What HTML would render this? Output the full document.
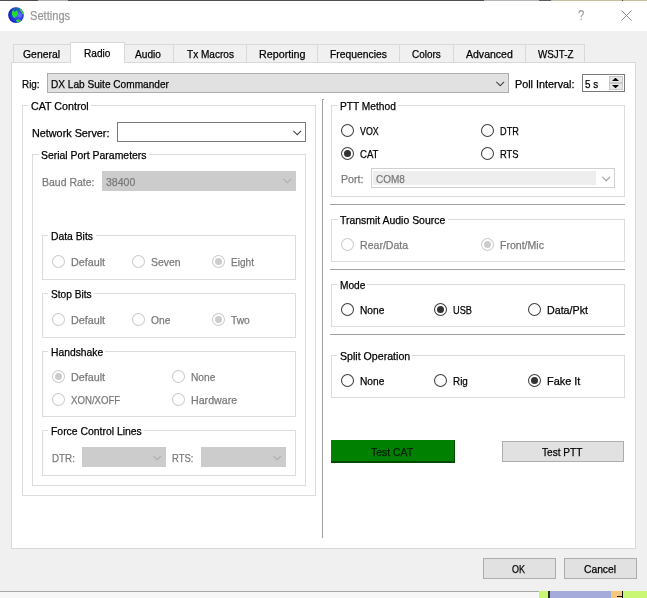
<!DOCTYPE html>
<html><head><meta charset="utf-8"><title>Settings</title>
<style>html,body{margin:0;padding:0;background:#f0f0f0;overflow:hidden}body{width:647px;height:598px;position:relative;font-family:'Liberation Sans', sans-serif;font-size:11px}div,span,svg{display:block}</style></head>
<body>
<div style="position:absolute;left:0px;top:0px;width:647px;height:598px;background:#f0f0f0;"></div>
<div style="position:absolute;left:0px;top:0px;width:647px;height:31px;background:#fff;"></div>
<div style="position:absolute;left:0px;top:0px;width:647px;height:1px;background:#4f4f4f;"></div>
<div style="position:absolute;left:38px;top:0px;width:30px;height:1px;background:#b0b0b0;"></div>
<div style="position:absolute;left:484px;top:0px;width:55px;height:1px;background:#b4b4b4;"></div>
<div style="position:absolute;left:539px;top:0px;width:12px;height:1px;background:#5e5e5e;"></div>
<div style="position:absolute;left:551px;top:0px;width:96px;height:1px;background:#c2be9e;"></div>
<div style="position:absolute;left:622px;top:0px;width:1px;height:1px;background:#444;"></div>
<svg style="position:absolute;left:6px;top:5px" width="20" height="20" viewBox="6 5 20 20">
<defs><radialGradient id="gg" cx="0.62" cy="0.48" r="0.62"><stop offset="0" stop-color="#5868f8"/><stop offset="0.55" stop-color="#2c3ee6"/><stop offset="1" stop-color="#141cb4"/></radialGradient>
<filter id="gb" x="-20%" y="-20%" width="140%" height="140%"><feGaussianBlur stdDeviation="0.45"/></filter>
<clipPath id="gc"><circle cx="16" cy="15.1" r="7.9"/></clipPath></defs>
<circle cx="16" cy="15.1" r="7.9" fill="url(#gg)"/>
<g clip-path="url(#gc)" filter="url(#gb)">
<path d="M12 9.2 Q16 6.6 20.4 9 L19.2 11 L12.8 11 Z" fill="#1a6ca4" opacity="0.85"/>
<path d="M12.1 11 L13.6 10.5 L14.9 12.2 L16.2 10.7 L17.7 11.1 L17.9 13.6 L16.7 16.3 L15 17.9 L13.1 17.1 L11.9 14.5 Z" fill="#22e02c"/>
<path d="M19.8 8.6 Q23.4 10 24 14.4 L22.4 14.2 Q21.9 11.6 19.8 10.2 Z" fill="#3ccf44"/>
<path d="M16 20 L18.5 19.5 L21 20.1 Q19.6 22.4 17 22.8 Z" fill="#2ada38"/>
<ellipse cx="19.9" cy="15.2" rx="2.1" ry="2.3" fill="#6e7cff" opacity="0.6"/>
</g>
</svg>
<svg style="position:absolute;left:576px;top:9px" width="10" height="13" viewBox="0 0 10 13"><path d="M3 4 Q3 1.6 5.2 1.6 Q7.4 1.6 7.4 3.7 Q7.4 5 6.2 5.9 Q5.2 6.7 5.2 8.2" fill="none" stroke="#999" stroke-width="1.1"/><rect x="4.6" y="9.8" width="1.2" height="1.3" fill="#999"/></svg>
<svg style="position:absolute;left:621px;top:10px" width="11" height="11" viewBox="0 0 11 11"><path d="M0.5 0.5 L10.5 10.5 M10.5 0.5 L0.5 10.5" stroke="#8c8c8c" stroke-width="1" fill="none"/></svg>
<div style="position:absolute;left:11px;top:62px;width:625px;height:487px;box-sizing:border-box;background:#fff;border:1px solid #d9d9d9;"></div>
<div style="position:absolute;left:13px;top:44px;width:58px;height:19px;box-sizing:border-box;background:#f0f0f0;border:1px solid #d9d9d9;"></div>
<div style="position:absolute;left:124px;top:44px;width:50px;height:19px;box-sizing:border-box;background:#f0f0f0;border:1px solid #d9d9d9;"></div>
<div style="position:absolute;left:173px;top:44px;width:74px;height:19px;box-sizing:border-box;background:#f0f0f0;border:1px solid #d9d9d9;"></div>
<div style="position:absolute;left:246px;top:44px;width:72px;height:19px;box-sizing:border-box;background:#f0f0f0;border:1px solid #d9d9d9;"></div>
<div style="position:absolute;left:317px;top:44px;width:83px;height:19px;box-sizing:border-box;background:#f0f0f0;border:1px solid #d9d9d9;"></div>
<div style="position:absolute;left:399px;top:44px;width:55px;height:19px;box-sizing:border-box;background:#f0f0f0;border:1px solid #d9d9d9;"></div>
<div style="position:absolute;left:453px;top:44px;width:73px;height:19px;box-sizing:border-box;background:#f0f0f0;border:1px solid #d9d9d9;"></div>
<div style="position:absolute;left:525px;top:44px;width:60px;height:19px;box-sizing:border-box;background:#f0f0f0;border:1px solid #d9d9d9;"></div>
<div style="position:absolute;left:70px;top:42px;width:55px;height:21px;box-sizing:border-box;background:#fff;border:1px solid #d9d9d9;border-bottom:none;"></div>
<div style="position:absolute;left:47px;top:73px;width:462px;height:20px;box-sizing:border-box;background:#e1e1e1;border:1px solid #adadad;"></div>
<svg style="position:absolute;left:496px;top:81px" width="9" height="6" viewBox="0 0 9 6"><path d="M0.3 0.9 L4.2 4.7 L8.1 0.9" fill="none" stroke="#444" stroke-width="1.05"/></svg>
<div style="position:absolute;left:582px;top:74px;width:43px;height:18px;box-sizing:border-box;background:#fff;border:1px solid #7a7a7a;"></div>
<div style="position:absolute;left:609px;top:76px;width:14px;height:7px;box-sizing:border-box;background:#e6e6e6;border:1px solid #c8c8c8;"></div>
<div style="position:absolute;left:609px;top:83px;width:14px;height:7px;box-sizing:border-box;background:#e6e6e6;border:1px solid #c8c8c8;"></div>
<svg style="position:absolute;left:612px;top:78px" width="7" height="3" viewBox="0 0 7 3"><path d="M0 3 L3.5 -0.3 L7 3 Z" fill="#000"/></svg>
<svg style="position:absolute;left:612px;top:85px" width="7" height="3" viewBox="0 0 7 3"><path d="M0 0 L3.5 3.3 L7 0 Z" fill="#000"/></svg>
<div style="position:absolute;left:22px;top:105px;width:294px;height:391px;box-sizing:border-box;border:1px solid #dcdcdc;"></div>
<div style="position:absolute;left:28px;top:105px;width:63px;height:1px;background:#fff;"></div>
<div style="position:absolute;left:117px;top:122px;width:189px;height:20px;box-sizing:border-box;background:#fff;border:1px solid #7a7a7a;"></div>
<svg style="position:absolute;left:293px;top:130px" width="9" height="6" viewBox="0 0 9 6"><path d="M0.3 0.9 L4.2 4.7 L8.1 0.9" fill="none" stroke="#444" stroke-width="1.05"/></svg>
<div style="position:absolute;left:32px;top:154px;width:274px;height:332px;box-sizing:border-box;border:1px solid #dcdcdc;"></div>
<div style="position:absolute;left:39px;top:154px;width:110px;height:1px;background:#fff;"></div>
<div style="position:absolute;left:102px;top:171px;width:194px;height:20px;background:#cccccc;"></div>
<svg style="position:absolute;left:283px;top:178px" width="9" height="6" viewBox="0 0 9 6"><path d="M0.3 0.9 L4.2 4.7 L8.1 0.9" fill="none" stroke="#adadad" stroke-width="1.05"/></svg>
<div style="position:absolute;left:42px;top:235px;width:254px;height:45px;box-sizing:border-box;border:1px solid #dcdcdc;"></div>
<div style="position:absolute;left:48px;top:235px;width:48px;height:1px;background:#fff;"></div>
<svg style="position:absolute;left:50px;top:253px" width="17" height="17" viewBox="0 0 17 17"><circle cx="8.5" cy="8.5" r="6" fill="#fff" stroke="#cdcdcd" stroke-width="1.05"/></svg>
<svg style="position:absolute;left:130px;top:253px" width="17" height="17" viewBox="0 0 17 17"><circle cx="8.5" cy="8.5" r="6" fill="#fff" stroke="#cdcdcd" stroke-width="1.05"/></svg>
<svg style="position:absolute;left:210px;top:253px" width="17" height="17" viewBox="0 0 17 17"><circle cx="8.5" cy="8.5" r="6" fill="#fff" stroke="#cdcdcd" stroke-width="1.05"/><circle cx="8.5" cy="8.5" r="3.5" fill="#cccccc"/></svg>
<div style="position:absolute;left:42px;top:293px;width:254px;height:45px;box-sizing:border-box;border:1px solid #dcdcdc;"></div>
<div style="position:absolute;left:48px;top:293px;width:46px;height:1px;background:#fff;"></div>
<svg style="position:absolute;left:50px;top:311px" width="17" height="17" viewBox="0 0 17 17"><circle cx="8.5" cy="8.5" r="6" fill="#fff" stroke="#cdcdcd" stroke-width="1.05"/></svg>
<svg style="position:absolute;left:130px;top:311px" width="17" height="17" viewBox="0 0 17 17"><circle cx="8.5" cy="8.5" r="6" fill="#fff" stroke="#cdcdcd" stroke-width="1.05"/></svg>
<svg style="position:absolute;left:210px;top:311px" width="17" height="17" viewBox="0 0 17 17"><circle cx="8.5" cy="8.5" r="6" fill="#fff" stroke="#cdcdcd" stroke-width="1.05"/><circle cx="8.5" cy="8.5" r="3.5" fill="#cccccc"/></svg>
<div style="position:absolute;left:42px;top:351px;width:254px;height:66px;box-sizing:border-box;border:1px solid #dcdcdc;"></div>
<div style="position:absolute;left:48px;top:351px;width:57px;height:1px;background:#fff;"></div>
<svg style="position:absolute;left:50px;top:368px" width="17" height="17" viewBox="0 0 17 17"><circle cx="8.5" cy="8.5" r="6" fill="#fff" stroke="#cdcdcd" stroke-width="1.05"/><circle cx="8.5" cy="8.5" r="3.5" fill="#cccccc"/></svg>
<svg style="position:absolute;left:170px;top:368px" width="17" height="17" viewBox="0 0 17 17"><circle cx="8.5" cy="8.5" r="6" fill="#fff" stroke="#cdcdcd" stroke-width="1.05"/></svg>
<svg style="position:absolute;left:50px;top:391px" width="17" height="17" viewBox="0 0 17 17"><circle cx="8.5" cy="8.5" r="6" fill="#fff" stroke="#cdcdcd" stroke-width="1.05"/></svg>
<svg style="position:absolute;left:170px;top:391px" width="17" height="17" viewBox="0 0 17 17"><circle cx="8.5" cy="8.5" r="6" fill="#fff" stroke="#cdcdcd" stroke-width="1.05"/></svg>
<div style="position:absolute;left:42px;top:430px;width:254px;height:46px;box-sizing:border-box;border:1px solid #dcdcdc;"></div>
<div style="position:absolute;left:48px;top:430px;width:96px;height:1px;background:#fff;"></div>
<div style="position:absolute;left:82px;top:447px;width:84px;height:20px;background:#cccccc;"></div>
<svg style="position:absolute;left:153px;top:455px" width="9" height="6" viewBox="0 0 9 6"><path d="M0.3 0.9 L4.2 4.7 L8.1 0.9" fill="none" stroke="#adadad" stroke-width="1.05"/></svg>
<div style="position:absolute;left:201px;top:447px;width:85px;height:20px;background:#cccccc;"></div>
<svg style="position:absolute;left:273px;top:455px" width="9" height="6" viewBox="0 0 9 6"><path d="M0.3 0.9 L4.2 4.7 L8.1 0.9" fill="none" stroke="#adadad" stroke-width="1.05"/></svg>
<div style="position:absolute;left:322px;top:99px;width:1px;height:439px;background:#a0a0a0;"></div>
<div style="position:absolute;left:323px;top:99px;width:1px;height:439px;background:#fff;"></div>
<div style="position:absolute;left:323px;top:99px;width:1px;height:1px;background:#a0a0a0;"></div>
<div style="position:absolute;left:331px;top:105px;width:294px;height:92px;box-sizing:border-box;border:1px solid #dcdcdc;"></div>
<div style="position:absolute;left:338px;top:105px;width:60px;height:1px;background:#fff;"></div>
<svg style="position:absolute;left:339px;top:122px" width="17" height="17" viewBox="0 0 17 17"><circle cx="8.5" cy="8.5" r="6" fill="#fff" stroke="#404040" stroke-width="1.05"/></svg>
<svg style="position:absolute;left:479px;top:122px" width="17" height="17" viewBox="0 0 17 17"><circle cx="8.5" cy="8.5" r="6" fill="#fff" stroke="#404040" stroke-width="1.05"/></svg>
<svg style="position:absolute;left:339px;top:145px" width="17" height="17" viewBox="0 0 17 17"><circle cx="8.5" cy="8.5" r="6" fill="#fff" stroke="#404040" stroke-width="1.05"/><circle cx="8.5" cy="8.5" r="3.5" fill="#333333"/></svg>
<svg style="position:absolute;left:479px;top:145px" width="17" height="17" viewBox="0 0 17 17"><circle cx="8.5" cy="8.5" r="6" fill="#fff" stroke="#404040" stroke-width="1.05"/></svg>
<div style="position:absolute;left:371px;top:168px;width:244px;height:20px;box-sizing:border-box;background:#fff;border:1px solid #d0d0d0;"></div>
<div style="position:absolute;left:373px;top:171px;width:223px;height:14px;background:#eeeeee;"></div>
<svg style="position:absolute;left:602px;top:176px" width="9" height="6" viewBox="0 0 9 6"><path d="M0.3 0.9 L4.2 4.7 L8.1 0.9" fill="none" stroke="#9c9c9c" stroke-width="1.05"/></svg>
<div style="position:absolute;left:330px;top:204px;width:295px;height:1px;background:#a0a0a0;"></div>
<div style="position:absolute;left:330px;top:205px;width:295px;height:1px;background:#fff;"></div>
<div style="position:absolute;left:331px;top:219px;width:294px;height:43px;box-sizing:border-box;border:1px solid #dcdcdc;"></div>
<div style="position:absolute;left:338px;top:219px;width:110px;height:1px;background:#fff;"></div>
<svg style="position:absolute;left:339px;top:236px" width="17" height="17" viewBox="0 0 17 17"><circle cx="8.5" cy="8.5" r="6" fill="#fff" stroke="#cdcdcd" stroke-width="1.05"/></svg>
<svg style="position:absolute;left:479px;top:236px" width="17" height="17" viewBox="0 0 17 17"><circle cx="8.5" cy="8.5" r="6" fill="#fff" stroke="#cdcdcd" stroke-width="1.05"/><circle cx="8.5" cy="8.5" r="3.5" fill="#cccccc"/></svg>
<div style="position:absolute;left:330px;top:269px;width:295px;height:1px;background:#a0a0a0;"></div>
<div style="position:absolute;left:330px;top:270px;width:295px;height:1px;background:#fff;"></div>
<div style="position:absolute;left:331px;top:284px;width:294px;height:43px;box-sizing:border-box;border:1px solid #dcdcdc;"></div>
<div style="position:absolute;left:337px;top:284px;width:30px;height:1px;background:#fff;"></div>
<svg style="position:absolute;left:339px;top:301px" width="17" height="17" viewBox="0 0 17 17"><circle cx="8.5" cy="8.5" r="6" fill="#fff" stroke="#404040" stroke-width="1.05"/></svg>
<svg style="position:absolute;left:432px;top:301px" width="17" height="17" viewBox="0 0 17 17"><circle cx="8.5" cy="8.5" r="6" fill="#fff" stroke="#404040" stroke-width="1.05"/><circle cx="8.5" cy="8.5" r="3.5" fill="#333333"/></svg>
<svg style="position:absolute;left:526px;top:301px" width="17" height="17" viewBox="0 0 17 17"><circle cx="8.5" cy="8.5" r="6" fill="#fff" stroke="#404040" stroke-width="1.05"/></svg>
<div style="position:absolute;left:330px;top:334px;width:295px;height:1px;background:#a0a0a0;"></div>
<div style="position:absolute;left:330px;top:335px;width:295px;height:1px;background:#fff;"></div>
<div style="position:absolute;left:331px;top:355px;width:294px;height:43px;box-sizing:border-box;border:1px solid #dcdcdc;"></div>
<div style="position:absolute;left:337px;top:355px;width:75px;height:1px;background:#fff;"></div>
<svg style="position:absolute;left:339px;top:372px" width="17" height="17" viewBox="0 0 17 17"><circle cx="8.5" cy="8.5" r="6" fill="#fff" stroke="#404040" stroke-width="1.05"/></svg>
<svg style="position:absolute;left:432px;top:372px" width="17" height="17" viewBox="0 0 17 17"><circle cx="8.5" cy="8.5" r="6" fill="#fff" stroke="#404040" stroke-width="1.05"/></svg>
<svg style="position:absolute;left:526px;top:372px" width="17" height="17" viewBox="0 0 17 17"><circle cx="8.5" cy="8.5" r="6" fill="#fff" stroke="#404040" stroke-width="1.05"/><circle cx="8.5" cy="8.5" r="3.5" fill="#333333"/></svg>
<div style="position:absolute;left:331px;top:440px;width:124px;height:23px;box-sizing:border-box;background:#008000;border-right:1px solid #004d00;border-bottom:2px solid #004d00;"></div>
<div style="position:absolute;left:502px;top:441px;width:122px;height:21px;box-sizing:border-box;background:#e1e1e1;border:1px solid #adadad;"></div>
<div style="position:absolute;left:483px;top:558px;width:73px;height:21px;box-sizing:border-box;background:#e1e1e1;border:1px solid #adadad;"></div>
<div style="position:absolute;left:564px;top:558px;width:73px;height:21px;box-sizing:border-box;background:#e1e1e1;border:1px solid #adadad;"></div>
<div style="position:absolute;left:0px;top:591px;width:647px;height:1px;background:#a8a8a8;"></div>
<div style="position:absolute;left:0px;top:592px;width:647px;height:6px;background:#f7f7f7;"></div>
<div style="position:absolute;left:539px;top:591px;width:108px;height:7px;background:#c9f774;"></div>
<div style="position:absolute;left:548px;top:591px;width:2px;height:7px;background:#26331a;"></div>
<div style="position:absolute;left:550px;top:591px;width:61px;height:7px;background:#a5acdc;"></div>
<div style="position:absolute;left:611px;top:591px;width:11px;height:7px;background:#f6c87c;"></div>
<div style="position:absolute;left:622px;top:591px;width:1px;height:7px;background:#111;"></div>
<div style="position:absolute;left:617px;top:596px;width:5px;height:1px;background:#111;"></div>
<div style="position:absolute;left:0;top:0;width:647px;height:598px;will-change:transform;-webkit-text-stroke:0.25px;">
<span style="position:absolute;left:29.90px;top:9px;line-height:14px;white-space:pre;font-size:12px;color:#999;transform-origin:0 0;transform:scaleX(0.9248)">Settings</span>
<span style="position:absolute;left:22.90px;top:47px;line-height:14px;white-space:pre;font-size:11px;color:#000;transform-origin:0 0;transform:scaleX(0.9460)">General</span>
<span style="position:absolute;left:83.90px;top:46px;line-height:14px;white-space:pre;font-size:11px;color:#000;transform-origin:0 0;transform:scaleX(0.9188)">Radio</span>
<span style="position:absolute;left:135.20px;top:47px;line-height:14px;white-space:pre;font-size:11px;color:#000;transform-origin:0 0;transform:scaleX(0.9209)">Audio</span>
<span style="position:absolute;left:186.50px;top:47px;line-height:14px;white-space:pre;font-size:11px;color:#000;transform-origin:0 0;transform:scaleX(0.9144)">Tx Macros</span>
<span style="position:absolute;left:258.70px;top:47px;line-height:14px;white-space:pre;font-size:11px;color:#000;transform-origin:0 0;transform:scaleX(0.9752)">Reporting</span>
<span style="position:absolute;left:329.60px;top:47px;line-height:14px;white-space:pre;font-size:11px;color:#000;transform-origin:0 0;transform:scaleX(0.9388)">Frequencies</span>
<span style="position:absolute;left:412.00px;top:47px;line-height:14px;white-space:pre;font-size:11px;color:#000;transform-origin:0 0;transform:scaleX(0.9044)">Colors</span>
<span style="position:absolute;left:466.30px;top:47px;line-height:14px;white-space:pre;font-size:11px;color:#000;transform-origin:0 0;transform:scaleX(0.9568)">Advanced</span>
<span style="position:absolute;left:538.10px;top:47px;line-height:14px;white-space:pre;font-size:11px;color:#000;transform-origin:0 0;transform:scaleX(0.8926)">WSJT-Z</span>
<span style="position:absolute;left:21.90px;top:77px;line-height:14px;white-space:pre;font-size:11px;color:#000;transform-origin:0 0;transform:scaleX(0.8972)">Rig:</span>
<span style="position:absolute;left:50.80px;top:77px;line-height:14px;white-space:pre;font-size:11px;color:#000;transform-origin:0 0;transform:scaleX(0.9182)">DX Lab Suite Commander</span>
<span style="position:absolute;left:514.80px;top:77px;line-height:14px;white-space:pre;font-size:11px;color:#000;transform-origin:0 0;transform:scaleX(0.9823)">Poll Interval:</span>
<span style="position:absolute;left:584.70px;top:77px;line-height:14px;white-space:pre;font-size:11px;color:#000;transform-origin:0 0;transform:scaleX(0.8963)">5 s</span>
<span style="position:absolute;left:30.70px;top:99px;line-height:14px;white-space:pre;font-size:11px;color:#000;transform-origin:0 0;transform:scaleX(0.9704)">CAT Control</span>
<span style="position:absolute;left:31.90px;top:126px;line-height:14px;white-space:pre;font-size:11px;color:#000;transform-origin:0 0;transform:scaleX(0.9823)">Network Server:</span>
<span style="position:absolute;left:41.00px;top:148px;line-height:14px;white-space:pre;font-size:11px;color:#000;transform-origin:0 0;transform:scaleX(0.9484)">Serial Port Parameters</span>
<span style="position:absolute;left:41.80px;top:175px;line-height:14px;white-space:pre;font-size:11px;color:#7a7a7a;transform-origin:0 0;transform:scaleX(0.9530)">Baud Rate:</span>
<span style="position:absolute;left:106.20px;top:175px;line-height:14px;white-space:pre;font-size:11px;color:#7a7a7a;transform-origin:0 0;transform:scaleX(0.9583)">38400</span>
<span style="position:absolute;left:50.70px;top:229px;line-height:14px;white-space:pre;font-size:11px;color:#000;transform-origin:0 0;transform:scaleX(0.9395)">Data Bits</span>
<span style="position:absolute;left:70.80px;top:255px;line-height:14px;white-space:pre;font-size:11px;color:#7a7a7a;transform-origin:0 0;transform:scaleX(0.9771)">Default</span>
<span style="position:absolute;left:150.70px;top:255px;line-height:14px;white-space:pre;font-size:11px;color:#7a7a7a;transform-origin:0 0;transform:scaleX(0.9462)">Seven</span>
<span style="position:absolute;left:230.70px;top:255px;line-height:14px;white-space:pre;font-size:11px;color:#7a7a7a;transform-origin:0 0;transform:scaleX(0.9154)">Eight</span>
<span style="position:absolute;left:50.70px;top:287px;line-height:14px;white-space:pre;font-size:11px;color:#000;transform-origin:0 0;transform:scaleX(0.9209)">Stop Bits</span>
<span style="position:absolute;left:70.80px;top:313px;line-height:14px;white-space:pre;font-size:11px;color:#7a7a7a;transform-origin:0 0;transform:scaleX(0.9771)">Default</span>
<span style="position:absolute;left:150.70px;top:313px;line-height:14px;white-space:pre;font-size:11px;color:#7a7a7a;transform-origin:0 0;transform:scaleX(0.9335)">One</span>
<span style="position:absolute;left:231.30px;top:313px;line-height:14px;white-space:pre;font-size:11px;color:#7a7a7a;transform-origin:0 0;transform:scaleX(0.9324)">Two</span>
<span style="position:absolute;left:50.70px;top:345px;line-height:14px;white-space:pre;font-size:11px;color:#000;transform-origin:0 0;transform:scaleX(0.9382)">Handshake</span>
<span style="position:absolute;left:70.80px;top:370px;line-height:14px;white-space:pre;font-size:11px;color:#7a7a7a;transform-origin:0 0;transform:scaleX(0.9771)">Default</span>
<span style="position:absolute;left:190.80px;top:370px;line-height:14px;white-space:pre;font-size:11px;color:#7a7a7a;transform-origin:0 0;transform:scaleX(0.9282)">None</span>
<span style="position:absolute;left:70.80px;top:393px;line-height:14px;white-space:pre;font-size:11px;color:#7a7a7a;transform-origin:0 0;transform:scaleX(0.8760)">XON/XOFF</span>
<span style="position:absolute;left:190.80px;top:393px;line-height:14px;white-space:pre;font-size:11px;color:#7a7a7a;transform-origin:0 0;transform:scaleX(0.9671)">Hardware</span>
<span style="position:absolute;left:50.70px;top:424px;line-height:14px;white-space:pre;font-size:11px;color:#000;transform-origin:0 0;transform:scaleX(0.9462)">Force Control Lines</span>
<span style="position:absolute;left:51.70px;top:451px;line-height:14px;white-space:pre;font-size:11px;color:#7a7a7a;transform-origin:0 0;transform:scaleX(0.8904)">DTR:</span>
<span style="position:absolute;left:171.70px;top:451px;line-height:14px;white-space:pre;font-size:11px;color:#7a7a7a;transform-origin:0 0;transform:scaleX(0.8588)">RTS:</span>
<span style="position:absolute;left:340.10px;top:99px;line-height:14px;white-space:pre;font-size:11px;color:#000;transform-origin:0 0;transform:scaleX(0.9254)">PTT Method</span>
<span style="position:absolute;left:359.80px;top:124px;line-height:14px;white-space:pre;font-size:11px;color:#000;transform-origin:0 0;transform:scaleX(0.8078)">VOX</span>
<span style="position:absolute;left:499.90px;top:124px;line-height:14px;white-space:pre;font-size:11px;color:#000;transform-origin:0 0;transform:scaleX(0.8340)">DTR</span>
<span style="position:absolute;left:359.80px;top:147px;line-height:14px;white-space:pre;font-size:11px;color:#000;transform-origin:0 0;transform:scaleX(0.8712)">CAT</span>
<span style="position:absolute;left:499.90px;top:147px;line-height:14px;white-space:pre;font-size:11px;color:#000;transform-origin:0 0;transform:scaleX(0.8526)">RTS</span>
<span style="position:absolute;left:340.90px;top:172px;line-height:14px;white-space:pre;font-size:11px;color:#7a7a7a;transform-origin:0 0;transform:scaleX(0.9709)">Port:</span>
<span style="position:absolute;left:375.50px;top:172px;line-height:14px;white-space:pre;font-size:11px;color:#7a7a7a;transform-origin:0 0;transform:scaleX(0.9064)">COM8</span>
<span style="position:absolute;left:340.30px;top:213px;line-height:14px;white-space:pre;font-size:11px;color:#000;transform-origin:0 0;transform:scaleX(0.9492)">Transmit Audio Source</span>
<span style="position:absolute;left:359.80px;top:238px;line-height:14px;white-space:pre;font-size:11px;color:#7a7a7a;transform-origin:0 0;transform:scaleX(0.9605)">Rear/Data</span>
<span style="position:absolute;left:499.50px;top:238px;line-height:14px;white-space:pre;font-size:11px;color:#7a7a7a;transform-origin:0 0;transform:scaleX(0.9582)">Front/Mic</span>
<span style="position:absolute;left:339.70px;top:278px;line-height:14px;white-space:pre;font-size:11px;color:#000;transform-origin:0 0;transform:scaleX(0.9234)">Mode</span>
<span style="position:absolute;left:359.80px;top:303px;line-height:14px;white-space:pre;font-size:11px;color:#000;transform-origin:0 0;transform:scaleX(0.9282)">None</span>
<span style="position:absolute;left:452.70px;top:303px;line-height:14px;white-space:pre;font-size:11px;color:#000;transform-origin:0 0;transform:scaleX(0.8393)">USB</span>
<span style="position:absolute;left:546.70px;top:303px;line-height:14px;white-space:pre;font-size:11px;color:#000;transform-origin:0 0;transform:scaleX(0.9708)">Data/Pkt</span>
<span style="position:absolute;left:339.70px;top:349px;line-height:14px;white-space:pre;font-size:11px;color:#000;transform-origin:0 0;transform:scaleX(0.9650)">Split Operation</span>
<span style="position:absolute;left:359.80px;top:374px;line-height:14px;white-space:pre;font-size:11px;color:#000;transform-origin:0 0;transform:scaleX(0.9282)">None</span>
<span style="position:absolute;left:452.70px;top:374px;line-height:14px;white-space:pre;font-size:11px;color:#000;transform-origin:0 0;transform:scaleX(0.8970)">Rig</span>
<span style="position:absolute;left:546.70px;top:374px;line-height:14px;white-space:pre;font-size:11px;color:#000;transform-origin:0 0;transform:scaleX(0.9920)">Fake It</span>
<span style="position:absolute;left:371.40px;top:445px;line-height:14px;white-space:pre;font-size:11px;color:#001a00;transform-origin:0 0;transform:scaleX(0.9487)">Test CAT</span>
<span style="position:absolute;left:542.10px;top:445px;line-height:14px;white-space:pre;font-size:11px;color:#000;transform-origin:0 0;transform:scaleX(0.9190)">Test PTT</span>
<span style="position:absolute;left:511.70px;top:562px;line-height:14px;white-space:pre;font-size:11px;color:#000;transform-origin:0 0;transform:scaleX(0.8154)">OK</span>
<span style="position:absolute;left:584.30px;top:562px;line-height:14px;white-space:pre;font-size:11px;color:#000;transform-origin:0 0;transform:scaleX(0.9350)">Cancel</span>
</div>
</body></html>
